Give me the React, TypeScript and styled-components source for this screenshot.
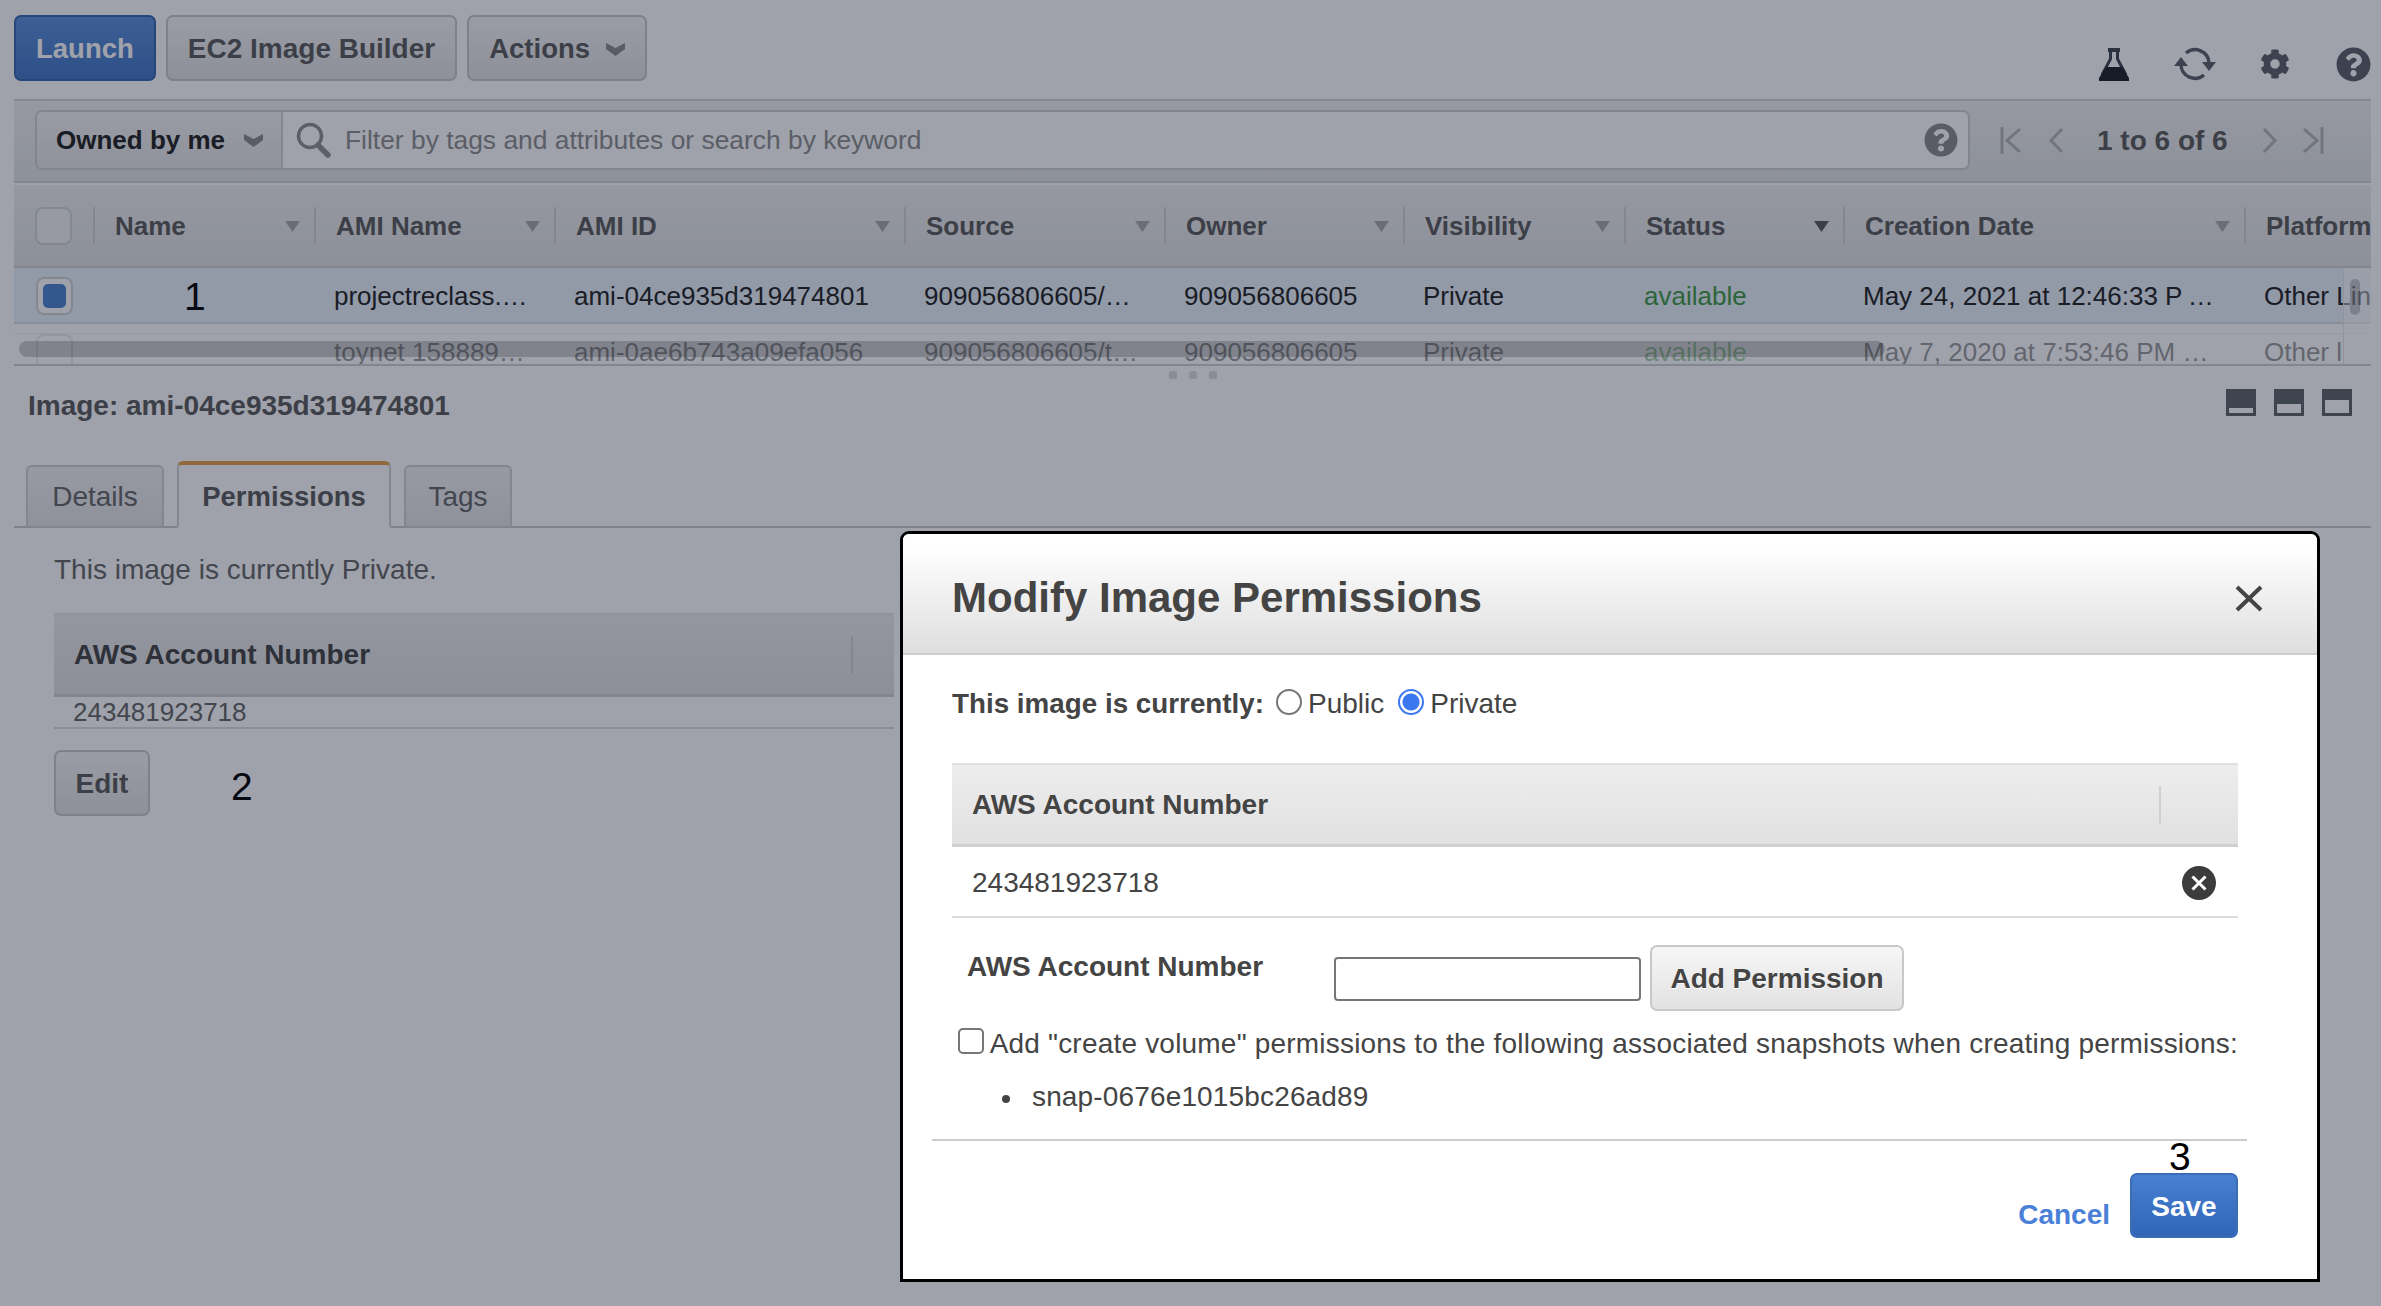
import styled, { createGlobalStyle } from "styled-components";
import { FaCog, FaQuestionCircle } from "react-icons/fa";

const GlobalStyle = createGlobalStyle`
    html, body {
        margin: 0;
        height: 1306px;
        overflow: hidden;
        background: #fff;
        font-family: "Liberation Sans", Arial, sans-serif;
        color: #555;
    }
    * { box-sizing: border-box; }
`;

const Page = styled.div`
    width: 2381px;
    height: 1306px;
    padding: 0 10px 0 14px;
`;

const Toolbar = styled.div`
    height: 99px;
    padding-top: 15px;
    display: flex;
    align-items: flex-start;
    gap: 10px;
`;

const Button = styled.button<{ $primary?: boolean }>`
    height: 66px;
    padding: 2px 20px 0;
    display: inline-flex;
    align-items: center;
    gap: 16px;
    border: 2px solid ${(p) => (p.$primary ? "#3567ad" : "#c8c8c8")};
    border-radius: 7px;
    background: ${(p) =>
        p.$primary
            ? "linear-gradient(#5b8fdc, #4276c6)"
            : "linear-gradient(#f6f6f6, #e2e2e2)"};
    color: ${(p) => (p.$primary ? "#fff" : "#5a5a5a")};
    font: bold 27.5px "Liberation Sans", Arial, sans-serif;
`;

const BuilderButton = styled(Button)`
    font-size: 28px;
`;

const ToolIcons = styled.div`
    margin-left: auto;
    display: flex;
    align-items: center;
    height: 36px;
    margin-top: 31px;
    color: #5b6068;
`;

const ToolIcon = styled.span<{ $width: number }>`
    width: ${(p) => p.$width}px;
    display: flex;
    justify-content: flex-end;
`;

const FilterBar = styled.div`
    height: 84px;
    border-top: 2px solid #d2d2d2;
    border-bottom: 2px solid #d2d2d2;
    padding: 9px 0 0 21px;
    background: linear-gradient(#f0f0f0, #e2e3e3);
    display: flex;
    align-items: flex-start;
`;

const SearchBox = styled.div`
    width: 1935px;
    height: 60px;
    display: flex;
    align-items: center;
    background: #fff;
    border: 2px solid #cfcfcf;
    border-radius: 7px;
    overflow: hidden;
`;

const OwnerSelect = styled.div`
    width: 246px;
    height: 100%;
    flex: none;
    padding: 0 18px 0 19px;
    display: flex;
    align-items: center;
    justify-content: space-between;
    background: linear-gradient(#f4f4f4, #e6e6e6);
    border-right: 2px solid #d2d2d2;
    font-size: 26px;
    font-weight: bold;
    color: #222;
`;

const SearchField = styled.div`
    flex: 1;
    display: flex;
    align-items: center;
    gap: 14px;
    padding: 0 10px 0 12px;
    font-size: 26.4px;
    color: #8e8e8e;
    svg:last-child { margin-left: auto; color: #8a8a8a; }
`;

const Pager = styled.div`
    flex: 1;
    height: 60px;
    display: flex;
    align-items: center;
    padding-left: 30px;
    color: #b4b4b4;
`;

const PagerLabel = styled.span`
    margin: 2px 34px 0 33px;
    font-size: 28px;
    font-weight: bold;
    color: #5a5a5a;
`;

const PagerSpacer = styled.span<{ $width: number }>`
    width: ${(p) => p.$width}px;
`;

const Gridded = styled.div`
    display: grid;
    grid-template-columns: 79px 221px 240px 350px 260px 239px 221px 219px 401px 127px;
    align-items: center;
`;

const HeadRow = styled(Gridded)`
    height: 83px;
    margin-top: 2px;
    background: linear-gradient(#efefef, #e1e2e2);
    border-bottom: 2px solid #d0d0d0;
`;

const HeadCell = styled.div`
    height: 37px;
    padding: 2px 14px 0 20px;
    display: flex;
    align-items: center;
    justify-content: space-between;
    border-left: 2px solid #d0d0d0;
    font-size: 26px;
    font-weight: bold;
    color: #5a5a5a;
    white-space: nowrap;
    overflow: hidden;
`;

const CheckCell = styled.div`
    padding-left: 21px;
    display: flex;
`;

const TableBox = styled.div`
    border-bottom: 2px solid #d0d0d0;
`;

const TableBody = styled.div`
    position: relative;
    height: 96px;
    overflow: hidden;
`;

const Row = styled(Gridded)<{ $selected?: boolean }>`
    height: ${(p) => (p.$selected ? "56px" : "38px")};
    margin-top: ${(p) => (p.$selected ? "0" : "9px")};
    padding-top: ${(p) => (p.$selected ? "2px" : "0")};
    background: ${(p) => (p.$selected ? "#eaf1fb" : "#fff")};
    border-top: ${(p) => (p.$selected ? "0" : "1px solid #e2e2e2")};
    border-bottom: ${(p) => (p.$selected ? "2px solid #dcdcdc" : "0")};
    opacity: ${(p) => (p.$selected ? 1 : 0.45)};
    align-items: ${(p) => (p.$selected ? "center" : "start")};
`;

const Cell = styled.div<{ $ok?: boolean }>`
    padding-left: 20px;
    font-size: 26px;
    line-height: 36px;
    color: ${(p) => (p.$ok ? "#3f9a43" : "#222")};
    white-space: nowrap;
`;

const RowCheck = styled.span<{ $on?: boolean }>`
    width: 37px;
    height: 38px;
    margin-left: 1px;
    border: 2px solid #cfd3d8;
    border-radius: 8px;
    padding: 5px;
    background: #fff;
    display: block;
    &::after {
        content: "";
        display: ${(p) => (p.$on ? "block" : "none")};
        height: 100%;
        border-radius: 5px;
        background: #4d83d0;
    }
`;

const HeadCheck = styled(RowCheck)`
    margin-left: 0;
    background: #f2f2f2;
`;

const Annotation = styled.span`
    font-size: 39px;
    line-height: 1;
    color: #000;
    font-weight: normal;
`;

const RowNumber = styled(Annotation)`
    display: block;
    margin-left: 71px;
`;

const ScrollTrack = styled.div`
    position: absolute;
    top: 0;
    right: 0;
    width: 28px;
    height: 100%;
    border-left: 1px solid #e6e6e6;
    background: rgba(255, 255, 255, 0.5);
`;

const ScrollThumbY = styled.div`
    position: absolute;
    top: 11px;
    left: 6px;
    width: 10px;
    height: 36px;
    border-radius: 5px;
    background: rgba(0, 0, 0, 0.2);
`;

const ScrollThumbX = styled.div`
    position: absolute;
    top: 73px;
    left: 5px;
    width: 1866px;
    height: 16px;
    border-radius: 8px;
    background: rgba(0, 0, 0, 0.2);
`;

const Grip = styled.div`
    height: 18px;
    display: flex;
    justify-content: center;
    align-items: center;
    gap: 12px;
`;

const GripDot = styled.span`
    width: 8px;
    height: 8px;
    border-radius: 3px 3px 2px 2px;
    background: #dcdcdc;
`;

const DetailHead = styled.div`
    height: 42px;
    padding: 1px 19px 0 14px;
    display: flex;
    align-items: center;
    justify-content: space-between;
    font-size: 28px;
    font-weight: bold;
    color: #5a5a5a;
`;

const WindowIcons = styled.div`
    display: flex;
    gap: 18px;
    margin-top: -5px;
`;

const TabStrip = styled.div`
    height: 67px;
    margin-top: 35px;
    padding-left: 12px;
    display: flex;
    align-items: flex-end;
    gap: 13px;
    border-bottom: 2px solid #ccc;
`;

const Tab = styled.div<{ $active?: boolean; $width: number }>`
    width: ${(p) => p.$width}px;
    height: ${(p) => (p.$active ? "67px" : "63px")};
    margin-bottom: -2px;
    padding-top: ${(p) => (p.$active ? "3px" : "1px")};
    display: flex;
    align-items: center;
    justify-content: center;
    font-size: ${(p) => (p.$active ? "27.5px" : "28px")};
    font-weight: ${(p) => (p.$active ? "bold" : "normal")};
    color: ${(p) => (p.$active ? "#5a5a5a" : "#666")};
    background: ${(p) => (p.$active ? "#fff" : "linear-gradient(#f2f2f2, #e4e4e4)")};
    border: 2px solid #d0d0d0;
    border-top: ${(p) => (p.$active ? "4px solid #e8a04c" : "2px solid #d0d0d0")};
    border-bottom: ${(p) => (p.$active ? "2px solid #fff" : "2px solid #ccc")};
    border-radius: 6px 6px 0 0;
`;

const TabBody = styled.div`
    padding: 22px 0 0 40px;
    width: 880px;
`;

const Note = styled.div`
    height: 40px;
    font-size: 28px;
    line-height: 40px;
    color: #666;
`;

const PermHead = styled.div`
    height: 84px;
    margin-top: 23px;
    padding: 1px 21px 0 20px;
    display: flex;
    align-items: center;
    justify-content: space-between;
    background: linear-gradient(#ececec, #e0e0e0);
    border-top: 2px solid #e4e4e4;
    border-bottom: 3px solid #cfcfcf;
    font-size: 28px;
    font-weight: bold;
    color: #444;
`;

const HeadRule = styled.span<{ $right: number }>`
    width: 2px;
    height: 38px;
    margin-right: ${(p) => p.$right}px;
    background: #d0d0d0;
`;

const PermRowSmall = styled.div`
    height: 32px;
    padding-left: 19px;
    font-size: 26px;
    line-height: 30px;
    color: #666;
    border-bottom: 2px solid #dcdcdc;
`;

const EditRow = styled.div`
    margin-top: 21px;
    display: flex;
    align-items: center;
`;

const EditButton = styled(Button)`
    width: 96px;
    padding: 2px 0 0;
    justify-content: center;
    font-size: 28px;
`;

const EditNumber = styled(Annotation)`
    margin: 6px 0 0 81px;
`;

const Overlay = styled.div`
    position: fixed;
    inset: 0;
    background: rgba(15, 23, 43, 0.4);
`;

const Modal = styled.div`
    position: absolute;
    top: 531px;
    left: 900px;
    width: 1420px;
    height: 751px;
    background: #fff;
    border: 3px solid #000;
    border-radius: 9px 9px 0 0;
    color: #444;
    overflow: hidden;
`;

const ModalHead = styled.div`
    height: 121px;
    padding: 9px 54px 0 49px;
    display: flex;
    align-items: center;
    justify-content: space-between;
    background: linear-gradient(#fff 12%, #f4f4f4 40%, #e6e6e6 80%, #dedede);
    border-bottom: 2px solid #ccc;
`;

const ModalTitle = styled.h2`
    margin: 0;
    font-size: 42px;
    font-weight: bold;
    color: #444;
`;

const ModalBody = styled.div`
    padding: 28px 79px 0 49px;
    font-size: 28px;
`;

const StatusRow = styled.div`
    height: 40px;
    display: flex;
    align-items: center;
    padding-top: 1px;
`;

const StatusLabel = styled.strong`
    width: 324px;
    font-size: 27.8px;
`;

const Radio = styled.input.attrs({ type: "radio", readOnly: true })`
    appearance: none;
    width: 26px;
    height: 26px;
    margin: -4px 6px 0 0;
    border: 2px solid #767676;
    border-radius: 50%;
    background: #fff;
    &:checked {
        border: 2px solid #3b78f0;
        background: radial-gradient(circle, #3b78f0 0 8px, #fff 9px);
    }
`;

const RadioText = styled.span`
    margin-right: 14px;
`;

const ModalPermHead = styled(PermHead)`
    margin-top: 40px;
    padding: 1px 0 0 20px;
    border-top: 2px solid #e0e0e0;
    background: linear-gradient(#ededed, #e1e1e1);
`;

const PermRow = styled.div`
    height: 71px;
    padding: 3px 22px 0 20px;
    display: flex;
    align-items: center;
    justify-content: space-between;
    border-bottom: 2px solid #ddd;
`;

const AddRow = styled.div`
    margin-top: 27px;
    height: 66px;
    display: flex;
    align-items: center;
`;

const AddLabel = styled.strong`
    width: 382px;
    padding-left: 15px;
    align-self: flex-start;
    margin-top: 6px;
    line-height: 32px;
`;

const AccountInput = styled.input.attrs({ type: "text" })`
    width: 307px;
    height: 44px;
    margin: 2px 9px 0 0;
    border: 2px solid #767676;
    border-radius: 4px;
    background: #fff;
`;

const AddButton = styled(Button)`
    width: 254px;
    padding: 2px 0 0;
    justify-content: center;
    color: #444;
    font-size: 28px;
    text-shadow: 0 1px 0 #fff;
`;

const CheckRow = styled.label`
    margin-top: 13px;
    height: 40px;
    padding-left: 6px;
    display: flex;
    align-items: center;
    gap: 6px;
    letter-spacing: 0.2px;
    white-space: nowrap;
`;

const Check = styled.input.attrs({ type: "checkbox" })`
    appearance: none;
    width: 26px;
    height: 26px;
    margin: -6px 0 0 0;
    border: 2px solid #767676;
    border-radius: 5px;
    background: #fff;
`;

const SnapList = styled.ul`
    margin: 13px 0 0;
    padding: 0 0 0 50px;
    list-style: none;
    line-height: 40px;
    letter-spacing: 0.15px;
`;

const SnapItem = styled.li`
    display: flex;
    align-items: center;
    gap: 22px;
    &::before {
        content: "";
        width: 8px;
        height: 8px;
        margin-top: 3px;
        border-radius: 50%;
        background: #444;
    }
`;

const Divider = styled.hr`
    margin: 22px -9px 0 -20px;
    height: 2px;
    border: 0;
    background: #ccc;
`;

const Footer = styled.div`
    margin-top: 32px;
    display: flex;
    justify-content: flex-end;
    gap: 20px;
`;

const CancelLink = styled.a`
    margin-top: 24px;
    font-weight: bold;
    line-height: 36px;
    color: #4a80d8;
`;

const SaveWrap = styled.div`
    position: relative;
`;

const SaveButton = styled(Button)`
    width: 108px;
    height: 65px;
    padding: 2px 0 0;
    justify-content: center;
    background: linear-gradient(#4a80d2, #2f66b8);
    border-color: #3a6cb8;
    color: #fff;
    font-size: 28px;
`;

const SaveNumber = styled(Annotation)`
    position: absolute;
    top: -36px;
    left: 39px;
`;

const Caret = ({ dark }: { dark?: boolean }) => (
    <svg width="15" height="11" viewBox="0 0 15 11">
        <path d="M0 0h15L7.5 11z" fill={dark ? "#5a5a5a" : "#a8a8a8"} />
    </svg>
);

const Chevron = ({ color }: { color: string }) => (
    <svg width="19" height="13" viewBox="0 0 19 13">
        <path d="M0 0l9.5 5L19 0v6l-9.5 7L0 6z" fill={color} />
    </svg>
);

const Flask = () => (
    <svg width="30" height="33" viewBox="0 0 30 33">
        <path d="M9 2h12" stroke="#3f444c" strokeWidth="4" />
        <path d="M11.5 3v8L3 27M18.5 3v8L27 27" stroke="#3f444c" strokeWidth="3" fill="none" />
        <path d="M7 19h16l7 11v3H0v-3z" fill="#1d2128" />
    </svg>
);

const Refresh = () => (
    <svg width="44" height="34" viewBox="0 0 44 34" fill="none" stroke="currentColor" strokeWidth="3.4">
        <path d="M8 18A14 14 0 0 0 31 28" />
        <path d="M36 16A14 14 0 0 0 13 6" />
        <path d="M1 19h14L8 10z" fill="currentColor" stroke="none" />
        <path d="M29 15h14l-7 9z" fill="currentColor" stroke="none" />
    </svg>
);

const Search = () => (
    <svg width="36" height="36" viewBox="0 0 36 36" fill="none" stroke="#8f8f8f">
        <circle cx="15" cy="14" r="11.5" strokeWidth="3.5" />
        <path d="M23 23l10 10" strokeWidth="5.5" strokeLinecap="round" />
    </svg>
);

const PagerIcon = ({ d, width }: { d: string; width: number }) => (
    <svg width={width} height="27" viewBox={`0 0 ${width} 27`} fill="none" stroke="currentColor" strokeWidth="3">
        <path d={d} />
    </svg>
);

const WindowIcon = ({ inset }: { inset: number }) => (
    <svg width="30" height="28" viewBox="0 0 30 28">
        <rect width="30" height="27" fill="#5f6468" />
        <rect x="3" y={24 - inset} width="24" height={inset} fill="#fff" />
    </svg>
);

const RemoveIcon = () => (
    <svg width="34" height="34" viewBox="0 0 34 34">
        <circle cx="17" cy="17" r="17" fill="#3c3c3c" />
        <path d="M10.5 10.5l13 13M23.5 10.5l-13 13" stroke="#fff" strokeWidth="3" />
    </svg>
);

const CloseIcon = () => (
    <svg width="28" height="27" viewBox="0 0 28 27">
        <path d="M2 2l24 23M26 2L2 25" stroke="#444" strokeWidth="4" />
    </svg>
);

const columns = ["Name", "AMI Name", "AMI ID", "Source", "Owner", "Visibility", "Status", "Creation Date", "Platform"];

const faded = [
    "toynet 158889…",
    "ami-0ae6b743a09efa056",
    "909056806605/t…",
    "909056806605",
    "Private",
    "available",
    "May 7, 2020 at 7:53:46 PM …",
    "Other l",
];

export default function App() {
    return (
        <>
            <GlobalStyle />
            <Page>
                <Toolbar>
                    <Button $primary>Launch</Button>
                    <BuilderButton>EC2 Image Builder</BuilderButton>
                    <Button>
                        Actions <Chevron color="#8a8a8a" />
                    </Button>
                    <ToolIcons>
                        <ToolIcon $width={30}><Flask /></ToolIcon>
                        <ToolIcon $width={88}><Refresh /></ToolIcon>
                        <ToolIcon $width={73}><FaCog size={30} /></ToolIcon>
                        <ToolIcon $width={81}><FaQuestionCircle size={35} /></ToolIcon>
                    </ToolIcons>
                </Toolbar>

                <FilterBar>
                    <SearchBox>
                        <OwnerSelect>
                            Owned by me <Chevron color="#8a8a8a" />
                        </OwnerSelect>
                        <SearchField>
                            <Search />
                            Filter by tags and attributes or search by keyword
                            <FaQuestionCircle size={34} />
                        </SearchField>
                    </SearchBox>
                    <Pager>
                        <PagerIcon width={22} d="M2 0v27M20 2L7 13.5 20 25" />
                        <PagerSpacer $width={26} />
                        <PagerIcon width={16} d="M14 2L3 13.5 14 25" />
                        <PagerLabel>1 to 6 of 6</PagerLabel>
                        <PagerIcon width={16} d="M2 2l11 11.5L2 25" />
                        <PagerSpacer $width={24} />
                        <PagerIcon width={22} d="M2 2l13 11.5L2 25M20 0v27" />
                    </Pager>
                </FilterBar>

                <TableBox>
                    <HeadRow>
                        <CheckCell><HeadCheck /></CheckCell>
                        {columns.map((c) => (
                            <HeadCell key={c}>
                                {c}
                                {c !== "Platform" && <Caret dark={c === "Status"} />}
                            </HeadCell>
                        ))}
                    </HeadRow>
                    <TableBody>
                        <Row $selected>
                            <CheckCell><RowCheck $on /></CheckCell>
                            <Cell><RowNumber>1</RowNumber></Cell>
                            <Cell>projectreclass.…</Cell>
                            <Cell>ami-04ce935d319474801</Cell>
                            <Cell>909056806605/…</Cell>
                            <Cell>909056806605</Cell>
                            <Cell>Private</Cell>
                            <Cell $ok>available</Cell>
                            <Cell>May 24, 2021 at 12:46:33 P{"\u2009"}…</Cell>
                            <Cell>Other Lin</Cell>
                        </Row>
                        <Row>
                            <CheckCell><RowCheck /></CheckCell>
                            <Cell />
                            {faded.map((t) => (
                                <Cell key={t} $ok={t === "available"}>{t}</Cell>
                            ))}
                        </Row>
                        <ScrollTrack><ScrollThumbY /></ScrollTrack>
                        <ScrollThumbX />
                    </TableBody>
                </TableBox>

                <Grip><GripDot /><GripDot /><GripDot /></Grip>

                <DetailHead>
                    Image: ami-04ce935d319474801
                    <WindowIcons>
                        <WindowIcon inset={5} />
                        <WindowIcon inset={9} />
                        <WindowIcon inset={13} />
                    </WindowIcons>
                </DetailHead>

                <TabStrip>
                    <Tab $width={138}>Details</Tab>
                    <Tab $active $width={214}>Permissions</Tab>
                    <Tab $width={108}>Tags</Tab>
                </TabStrip>

                <TabBody>
                    <Note>This image is currently Private.</Note>
                    <PermHead>
                        AWS Account Number
                        <HeadRule $right={20} />
                    </PermHead>
                    <PermRowSmall>243481923718</PermRowSmall>
                    <EditRow>
                        <EditButton>Edit</EditButton>
                        <EditNumber>2</EditNumber>
                    </EditRow>
                </TabBody>
            </Page>

            <Overlay>
                <Modal>
                    <ModalHead>
                        <ModalTitle>Modify Image Permissions</ModalTitle>
                        <CloseIcon />
                    </ModalHead>
                    <ModalBody>
                        <StatusRow>
                            <StatusLabel>This image is currently:</StatusLabel>
                            <Radio name="visibility" />
                            <RadioText>Public</RadioText>
                            <Radio name="visibility" defaultChecked />
                            <RadioText>Private</RadioText>
                        </StatusRow>
                        <ModalPermHead>
                            AWS Account Number
                            <HeadRule $right={77} />
                        </ModalPermHead>
                        <PermRow>
                            243481923718
                            <RemoveIcon />
                        </PermRow>
                        <AddRow>
                            <AddLabel>AWS Account Number</AddLabel>
                            <AccountInput />
                            <AddButton>Add Permission</AddButton>
                        </AddRow>
                        <CheckRow>
                            <Check />
                            Add "create volume" permissions to the following associated snapshots when creating permissions:
                        </CheckRow>
                        <SnapList>
                            <SnapItem>snap-0676e1015bc26ad89</SnapItem>
                        </SnapList>
                        <Divider />
                        <Footer>
                            <CancelLink>Cancel</CancelLink>
                            <SaveWrap>
                                <SaveNumber>3</SaveNumber>
                                <SaveButton>Save</SaveButton>
                            </SaveWrap>
                        </Footer>
                    </ModalBody>
                </Modal>
            </Overlay>
        </>
    );
}
